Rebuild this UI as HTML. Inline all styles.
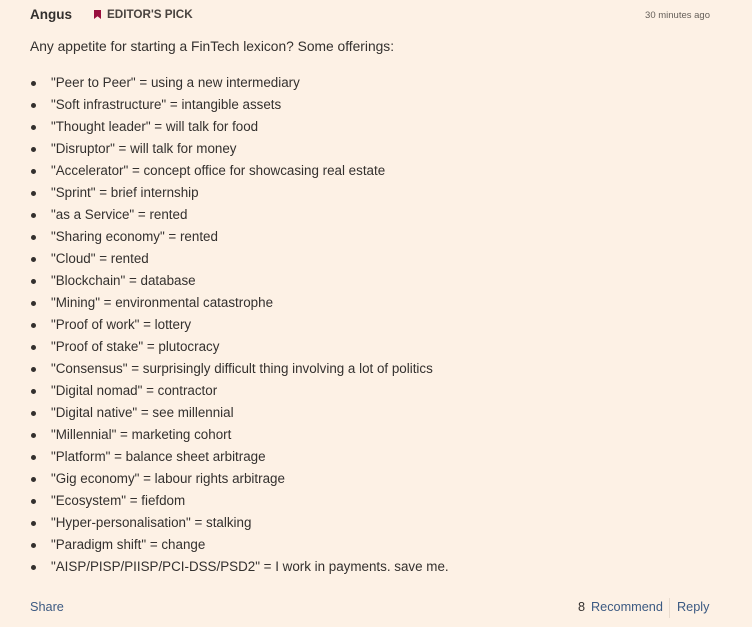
<!DOCTYPE html>
<html><head><meta charset="utf-8"><style>
html,body{margin:0;padding:0;}
body{width:752px;height:627px;background:#fdf1e5;font-family:"Liberation Sans",sans-serif;color:#33302e;position:relative;overflow:hidden;}
.name{position:absolute;left:30px;top:7px;font-weight:bold;font-size:13.5px;}
.pick{position:absolute;left:94px;top:8px;font-weight:bold;font-size:11.7px;color:#4a4440;}
.pick i{display:inline-block;width:7px;height:9px;background:#990f3d;clip-path:polygon(0 0,100% 0,100% 100%,50% 70%,0 100%);margin-right:6px;vertical-align:-1px;}
.time{position:absolute;right:42px;top:10px;font-size:9.5px;color:#66605a;}
.intro{position:absolute;left:30px;top:39px;font-size:13.8px;}
ul{position:absolute;left:30px;top:74px;margin:0;padding:0;list-style:none;font-size:13.4px;}
li{height:22px;line-height:18px;position:relative;padding-left:21px;white-space:nowrap;}
li:before{content:"";position:absolute;left:1px;top:7px;width:5px;height:5px;border-radius:50%;background:#33302e;}
.f{position:absolute;top:600px;font-size:12.7px;color:#3c5a82;}
.sep{position:absolute;left:669px;top:598px;width:1px;height:20px;background:#e9dccf;}
</style></head><body>
<div class="name">Angus</div>
<div class="pick"><i></i>EDITOR'S PICK</div>
<div class="time">30 minutes ago</div>
<div class="intro">Any appetite for starting a FinTech lexicon? Some offerings:</div>
<ul>
<li>"Peer to Peer" = using a new intermediary</li>
<li>"Soft infrastructure" = intangible assets</li>
<li>"Thought leader" = will talk for food</li>
<li>"Disruptor" = will talk for money</li>
<li>"Accelerator" = concept office for showcasing real estate</li>
<li>"Sprint" = brief internship</li>
<li>"as a Service" = rented</li>
<li>"Sharing economy" = rented</li>
<li>"Cloud" = rented</li>
<li>"Blockchain" = database</li>
<li>"Mining" = environmental catastrophe</li>
<li>"Proof of work" = lottery</li>
<li>"Proof of stake" = plutocracy</li>
<li>"Consensus" = surprisingly difficult thing involving a lot of politics</li>
<li>"Digital nomad" = contractor</li>
<li>"Digital native" = see millennial</li>
<li>"Millennial" = marketing cohort</li>
<li>"Platform" = balance sheet arbitrage</li>
<li>"Gig economy" = labour rights arbitrage</li>
<li>"Ecosystem" = fiefdom</li>
<li>"Hyper-personalisation" = stalking</li>
<li>"Paradigm shift" = change</li>
<li>"AISP/PISP/PIISP/PCI-DSS/PSD2" = I work in payments. save me.</li>
</ul>
<div class="f" style="left:30px">Share</div>
<div class="f" style="left:578px;color:#33302e">8</div>
<div class="f" style="left:591px">Recommend</div>
<div class="sep"></div>
<div class="f" style="left:677px">Reply</div>
</body></html>
